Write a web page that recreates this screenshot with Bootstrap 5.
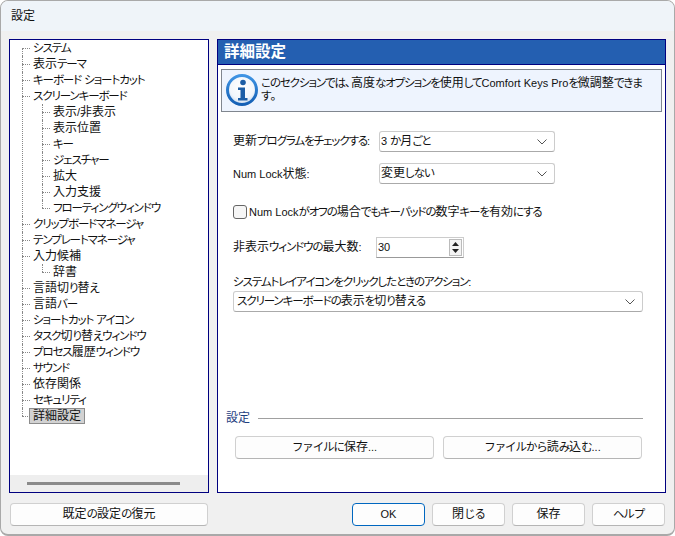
<!DOCTYPE html>
<html lang="ja">
  <head>
    <meta charset="UTF-8" />
    <title>設定</title>
    <link rel="stylesheet" href="https://cdn.jsdelivr.net/npm/bootstrap@5.3.3/dist/css/bootstrap.min.css" />
    <script src="https://cdn.jsdelivr.net/npm/bootstrap@5.3.3/dist/js/bootstrap.bundle.min.js"></script>
    <style>
      html, body { height: 100%; background: #fff; }
      body { font-family: "Liberation Sans", "Noto Sans CJK JP", sans-serif; font-size: 12px; color: #111; overflow: hidden; font-feature-settings: "palt"; }
      .kana { font-size: 11.5px; letter-spacing: -1.1px; }
      .lat { font-size: 11px; }
      .win { width: 675px; height: 536px; background: #f0f0f0; border: 1px solid #a9a9a9; border-bottom-width: 2px; border-radius: 8px; overflow: hidden; }
      .titlebar { height: 30px; background: #eff4f9; padding-left: 10px; line-height: 30px; }
      .content { height: 463px; padding: 8px 8px 0 8px; gap: 8px; }
      .pane { border: 1px solid #00007f; background: #fff; height: 454px; }
      .tree { width: 200px; }
      .tree-list { padding: 0 0 0 12px; height: 436px; }
      .tree ul { list-style: none; margin: 0; padding: 0; }
      .tree li { position: relative; line-height: 16px; padding-left: 11px; white-space: nowrap; }
      .tree li::before { content: ""; position: absolute; left: 0; top: 8px; width: 8px; border-top: 1px dotted #888; }
      .tree li::after { content: ""; position: absolute; left: 0; top: 0; bottom: 0; border-left: 1px dotted #888; }
      .tree li:last-child::after { bottom: auto; height: 8px; }
      .tree-list > ul > li:first-child::after { top: 8px; }
      .tree li ul { margin-left: 9px; }
      .tree .sel { display: inline-block; background: #d2d2d2; border: 1px solid #8c8c8c; line-height: 14px; padding: 0 3px; margin-left: -4px; }
      .hbar { height: 17px; background: #eee; padding: 7px 0 0 17px; }
      .hbar div { width: 153px; height: 3px; background: #8a8a8a; }
      .detail { width: 449px; }
      .detail-head { background: #245fb1; color: #fff; font-size: 15.5px; font-weight: 700; height: 25px; line-height: 23px; padding-left: 6px; border-bottom: 1px solid #00007f; }
      .info { margin: 4px 3px 0 3px; height: 43px; background: #eef4fe; border: 1px solid #80868f; padding: 4px 4px 0 4px; gap: 3px; }
      .info p { line-height: 13px; margin: 3px 0 0 0; }
      .form-area { padding: 19px 22px 0 15px; }
      .fake-select { background: #fff; border: 1px solid #ccc; border-bottom-color: #aaa; border-radius: 3px; height: 21px; line-height: 19px; padding: 0 7px 0 3px; }
      .w-select { width: 176px; padding-left: 1px; }
      .field label { width: 146px; white-space: nowrap; }
      .field-next { margin-top: 11px; }
      .check { width: 14px; height: 14px; border: 1px solid #666; border-radius: 3px; background: #f6f6f6; margin-right: 2px; }
      .spin { width: 88px; height: 21px; background: #fff; border: 1px solid #ccc; border-bottom-color: #999; padding-left: 1px; line-height: 19px; }
      .spin-btns { width: 13px; height: 17px; margin: 1px 1px 0 0; border: 1px solid #bbb; }
      .spin-btns span { height: 50%; background: #f4f4f4; }
      .section-line { height: 1px; background: #a0a0a0; margin-left: 8px; }
      .sect-title { color: #1f3f7f; }
      .btn-win { background: #fdfdfd; border: 1px solid #d0d0d0; border-bottom-color: #b5b5b5; border-radius: 4px; height: 23px; font-size: 12px; line-height: 21px; padding: 0; color: #111; text-align: center; }
      .btn-wide { width: 199px; }
      .btn-foot { width: 73px; }
      .btn-ok { width: 73px; border: 1px solid #0067c0; }
      .reset { width: 198px; }
      .footer { padding: 9px 9px 0 9px; }
      .row-check { margin-top: 21px; height: 14px; }
      .row-spin { margin-top: 18px; }
      .label-spin { width: 143px; white-space: nowrap; }
      .tray-label { margin-top: 15px; height: 18px; line-height: 18px; }
      .sect { margin-top: 98px; margin-left: -7px; height: 16px; }
      .sect-btns { margin-top: 10px; margin-left: 2px; gap: 9px; }
      .foot-right { gap: 7px; }
    </style>
  </head>
  <body>
    <div class="win">
      <div class="titlebar">設定</div>
      <div class="content d-flex">
        <div class="pane tree d-flex flex-column">
          <div class="tree-list flex-grow-1">
            <ul>
              <li>システム</li>
              <li>表示テーマ</li>
              <li>キーボード ショートカット</li>
              <li>スクリーンキーボード
                <ul>
                  <li>表示/非表示</li>
                  <li>表示位置</li>
                  <li>キー</li>
                  <li>ジェスチャー</li>
                  <li>拡大</li>
                  <li>入力支援</li>
                  <li>フローティングウィンドウ</li>
                </ul>
              </li>
              <li>クリップボードマネージャ</li>
              <li>テンプレートマネージャ</li>
              <li>入力候補
                <ul>
                  <li>辞書</li>
                </ul>
              </li>
              <li>言語切り替え</li>
              <li>言語バー</li>
              <li>ショートカット アイコン</li>
              <li>タスク切り替えウィンドウ</li>
              <li>プロセス履歴ウィンドウ</li>
              <li>サウンド</li>
              <li>依存関係</li>
              <li>セキュリティ</li>
              <li><span class="sel">詳細設定</span></li>
            </ul>
          </div>
          <div class="hbar"><div></div></div>
        </div>
        <div class="pane detail d-flex flex-column">
          <div class="detail-head">詳細設定</div>
          <div class="info d-flex">
            <svg width="32" height="32" viewBox="0 0 32 32" class="flex-shrink-0">
              <defs>
                <radialGradient id="ball" cx="50%" cy="40%" r="60%">
                  <stop offset="0" stop-color="#fff" />
                  <stop offset="0.7" stop-color="#f2f6fb" />
                  <stop offset="1" stop-color="#c5d8ee" />
                </radialGradient>
                <linearGradient id="ring" x1="0" y1="0" x2="0" y2="1">
                  <stop offset="0" stop-color="#3f94e4" />
                  <stop offset="1" stop-color="#145fb4" />
                </linearGradient>
              </defs>
              <circle cx="16" cy="16" r="14.5" fill="url(#ball)" stroke="url(#ring)" stroke-width="3" />
              <circle cx="17" cy="8.5" r="2.8" fill="#1d5ea6" />
              <path d="M12 13.5h7v10.5h2.5v2.5h-9.5v-2.5h2.5v-8h-2.5z" fill="#1d5ea6" />
            </svg>
            <p>このセクションでは、高度なオプションを使用してComfort Keys Proを微調整できま<br />す。</p>
          </div>
          <div class="form-area">
            <div class="field d-flex align-items-center">
              <label>更新プログラムをチェックする:</label>
              <div class="fake-select w-select d-flex justify-content-between align-items-center">
                <span>3 か月ごと</span>
                <svg width="10" height="6" viewBox="0 0 10 6"><path d="M0.5 0.5L5 5L9.5 0.5" fill="none" stroke="#555" /></svg>
              </div>
            </div>
            <div class="field field-next d-flex align-items-center">
              <label>Num Lock状態:</label>
              <div class="fake-select w-select d-flex justify-content-between align-items-center">
                <span>変更しない</span>
                <svg width="10" height="6" viewBox="0 0 10 6"><path d="M0.5 0.5L5 5L9.5 0.5" fill="none" stroke="#555" /></svg>
              </div>
            </div>
            <div class="d-flex align-items-center row-check">
              <span class="check"></span><span>Num Lockがオフの場合でもキーパッドの数字キーを有効にする</span>
            </div>
            <div class="d-flex align-items-center row-spin">
              <label class="label-spin">非表示ウィンドウの最大数:</label>
              <div class="spin d-flex justify-content-between">
                <span>30</span>
                <div class="spin-btns d-flex flex-column">
                  <span class="d-flex align-items-center justify-content-center"><svg width="7" height="4" viewBox="0 0 7 4"><path d="M3.5 0L7 4H0z" fill="#222" /></svg></span>
                  <span class="d-flex align-items-center justify-content-center"><svg width="7" height="4" viewBox="0 0 7 4"><path d="M0 0H7L3.5 4z" fill="#222" /></svg></span>
                </div>
              </div>
            </div>
            <div class="tray-label">システムトレイアイコンをクリックしたときのアクション:</div>
            <div class="fake-select d-flex justify-content-between align-items-center">
              <span>スクリーンキーボードの表示を切り替える</span>
              <svg width="10" height="6" viewBox="0 0 10 6"><path d="M0.5 0.5L5 5L9.5 0.5" fill="none" stroke="#555" /></svg>
            </div>
            <div class="d-flex align-items-center sect">
              <span class="sect-title">設定</span>
              <div class="section-line flex-grow-1"></div>
            </div>
            <div class="d-flex sect-btns">
              <button class="btn btn-win btn-wide">ファイルに保存...</button>
              <button class="btn btn-win btn-wide">ファイルから読み込む...</button>
            </div>
          </div>
        </div>
      </div>
      <div class="footer d-flex">
        <button class="btn btn-win reset">既定の設定の復元</button>
        <div class="d-flex ms-auto foot-right">
          <button class="btn btn-win btn-ok">OK</button>
          <button class="btn btn-win btn-foot">閉じる</button>
          <button class="btn btn-win btn-foot">保存</button>
          <button class="btn btn-win btn-foot">ヘルプ</button>
        </div>
      </div>
    </div>
    <script>
      // the original UI font has narrow kana and latin, tighten those runs
      var walker = document.createTreeWalker(document.querySelector(".win"), NodeFilter.SHOW_TEXT);
      var nodes = [];
      while (walker.nextNode()) {
        if (walker.currentNode.nodeValue.trim() !== "") nodes.push(walker.currentNode);
      }
      nodes.forEach(function (node) {
        var html = node.nodeValue.trim()
          .replace(/[\u3040-\u30ff]+/g, '<span class="kana">$&</span>')
          .replace(/[A-Za-z0-9 .:\/]+(?![^<]*>)/g, '<span class="lat">$&</span>');
        var holder = document.createElement("span");
        holder.innerHTML = html;
        node.parentNode.replaceChild(holder, node);
      });
    </script>
  </body>
</html>
